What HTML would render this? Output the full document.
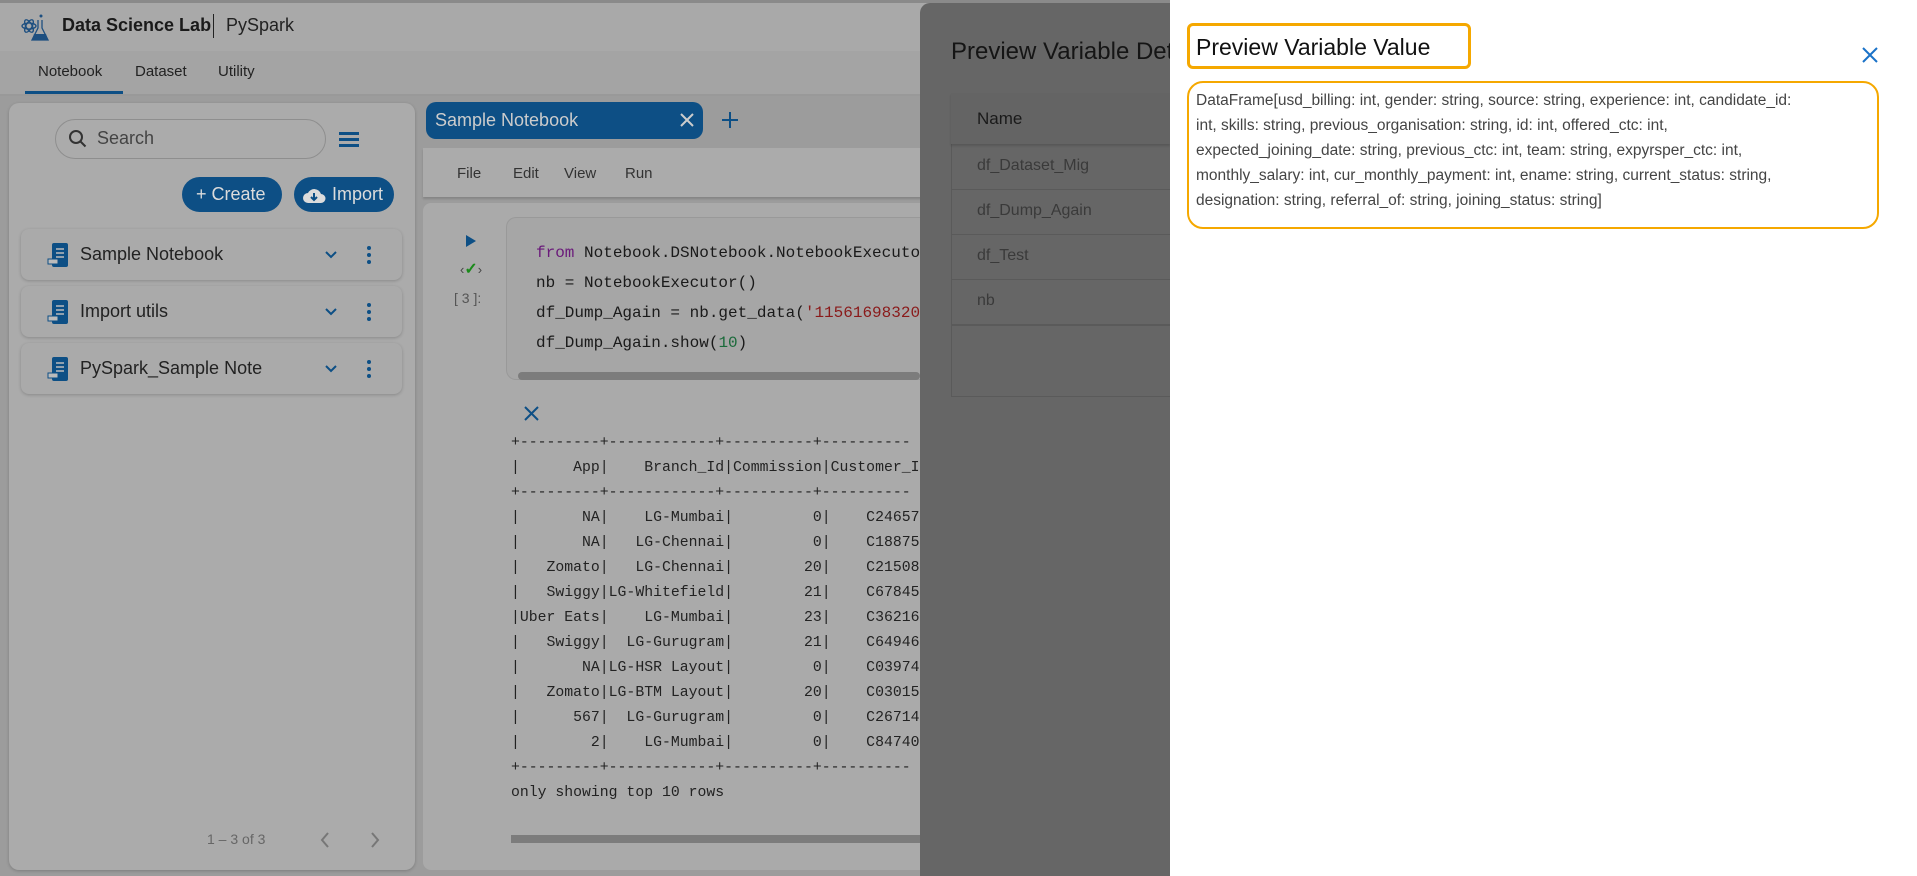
<!DOCTYPE html>
<html><head><meta charset="utf-8"><style>
*{box-sizing:border-box;margin:0;padding:0}
body{width:1917px;height:876px;overflow:hidden;position:relative;background:#9c9c9c;font-family:"Liberation Sans",sans-serif}
.a{position:absolute}
.mono{font-family:"Liberation Mono","DejaVu Sans Mono",monospace}
</style></head><body>
<div class="a" style="left:0;top:0;width:1917px;height:3px;background:#8a8a8a"></div>
<div class="a" style="left:0;top:3px;width:1917px;height:48px;background:#a9a9a9"></div>
<svg class="a" style="left:20px;top:12px" width="32" height="32" viewBox="0 0 32 32"><g fill="none" stroke="#1d4f80" stroke-width="1.3"><ellipse cx="9" cy="14" rx="7" ry="3"/><ellipse cx="9" cy="14" rx="7" ry="3" transform="rotate(60 9 14)"/><ellipse cx="9" cy="14" rx="7" ry="3" transform="rotate(-60 9 14)"/><path d="M18 8v8l-6 12h16l-6-12V8"/></g><path d="M14 22h12l2 6H12z" fill="#1d4f80"/><circle cx="21" cy="4" r="1.5" fill="#1d4f80"/></svg>
<div class="a" style="left:62px;top:15px;font-size:18px;font-weight:bold;color:#1a1a1a">Data Science Lab</div>
<div class="a" style="left:213px;top:14px;width:1px;height:24px;background:#222"></div>
<div class="a" style="left:226px;top:15px;font-size:18px;color:#222">PySpark</div>
<div class="a" style="left:0;top:51px;width:1917px;height:45px;background:#a4a4a4;border-bottom:2px solid #999"></div>
<div class="a" style="left:38px;top:63px;font-size:15px;color:#222">Notebook</div>
<div class="a" style="left:135px;top:63px;font-size:15px;color:#222">Dataset</div>
<div class="a" style="left:218px;top:63px;font-size:15px;color:#222">Utility</div>
<div class="a" style="left:25px;top:91px;width:98px;height:3px;background:#0d4f85"></div>

<div class="a" style="left:9px;top:103px;width:406px;height:767px;background:#ababab;border-radius:10px;box-shadow:0 1px 3px rgba(0,0,0,.2)"></div>
<div class="a" style="left:55px;top:119px;width:271px;height:40px;border:1px solid #8e8e8e;border-radius:20px"></div>
<svg class="a" style="left:68px;top:129px" width="20" height="20" viewBox="0 0 20 20"><circle cx="8" cy="8" r="6" fill="none" stroke="#333" stroke-width="2"/><path d="M12.5 12.5l5 5" stroke="#333" stroke-width="2"/></svg>
<div class="a" style="left:97px;top:128px;font-size:18px;color:#444">Search</div>
<div class="a" style="left:339px;top:132px;width:20px;height:3px;background:#0d4f85;box-shadow:0 6px 0 #0d4f85,0 12px 0 #0d4f85"></div>
<div class="a" style="left:182px;top:177px;width:100px;height:35px;background:#0d4f85;border-radius:18px;color:#dcdcdc;font-size:18px;line-height:35px;padding-left:14px">+ Create</div>
<div class="a" style="left:294px;top:177px;width:100px;height:35px;background:#0d4f85;border-radius:18px;color:#dcdcdc;font-size:18px;line-height:35px;padding-left:38px">Import</div>
<svg class="a" style="left:302px;top:185px" width="24" height="20" viewBox="0 0 24 20"><path d="M6 18a5 5 0 0 1 0-10 7 7 0 0 1 13 1 4.5 4.5 0 0 1 0 9z" fill="#dcdcdc"/><path d="M12 8v7M9 12l3 3 3-3" stroke="#0d4f85" stroke-width="2" fill="none"/></svg>

<div class="a" style="left:21px;top:229px;width:381px;height:51px;background:#aaaaaa;border-radius:8px;box-shadow:0 1px 3px rgba(0,0,0,.2)"></div>
<div class="a" style="left:21px;top:286px;width:381px;height:51px;background:#aaaaaa;border-radius:8px;box-shadow:0 1px 3px rgba(0,0,0,.2)"></div>
<div class="a" style="left:21px;top:343px;width:381px;height:51px;background:#aaaaaa;border-radius:8px;box-shadow:0 1px 3px rgba(0,0,0,.2)"></div>
<svg class="a" style="left:47px;top:242px" width="24" height="26" viewBox="0 0 24 26"><rect x="5" y="1" width="16" height="24" rx="2" fill="#0d4f85"/><path d="M9 7h8M9 11h8M9 15h8" stroke="#bbb" stroke-width="1.5"/><rect x="1" y="17" width="10" height="5" fill="#bbb" stroke="#0d4f85"/></svg>
<svg class="a" style="left:47px;top:299px" width="24" height="26" viewBox="0 0 24 26"><rect x="5" y="1" width="16" height="24" rx="2" fill="#0d4f85"/><path d="M9 7h8M9 11h8M9 15h8" stroke="#bbb" stroke-width="1.5"/><rect x="1" y="17" width="10" height="5" fill="#bbb" stroke="#0d4f85"/></svg>
<svg class="a" style="left:47px;top:356px" width="24" height="26" viewBox="0 0 24 26"><rect x="5" y="1" width="16" height="24" rx="2" fill="#0d4f85"/><path d="M9 7h8M9 11h8M9 15h8" stroke="#bbb" stroke-width="1.5"/><rect x="1" y="17" width="10" height="5" fill="#bbb" stroke="#0d4f85"/></svg>
<div class="a" style="left:80px;top:244px;font-size:18px;color:#222">Sample Notebook</div>
<div class="a" style="left:80px;top:301px;font-size:18px;color:#222">Import utils</div>
<div class="a" style="left:80px;top:358px;font-size:18px;color:#222">PySpark_Sample Note</div>
<svg class="a" style="left:323px;top:248px" width="16" height="130" viewBox="0 0 16 130"><g stroke="#0d4f85" stroke-width="2" fill="none"><path d="M3 4l5 5 5-5"/><path d="M3 61l5 5 5-5"/><path d="M3 118l5 5 5-5"/></g></svg>
<svg class="a" style="left:365px;top:245px" width="8" height="140" viewBox="0 0 8 140"><g fill="#0d4f85"><circle cx="4" cy="3" r="2"/><circle cx="4" cy="10" r="2"/><circle cx="4" cy="17" r="2"/><circle cx="4" cy="60" r="2"/><circle cx="4" cy="67" r="2"/><circle cx="4" cy="74" r="2"/><circle cx="4" cy="117" r="2"/><circle cx="4" cy="124" r="2"/><circle cx="4" cy="131" r="2"/></g></svg>
<div class="a" style="left:207px;top:831px;font-size:14px;color:#666">1 – 3 of 3</div>
<svg class="a" style="left:318px;top:830px" width="70" height="20" viewBox="0 0 70 20"><path d="M10 3l-6 7 6 7M54 3l6 7-6 7" stroke="#777" stroke-width="2" fill="none"/></svg>

<div class="a" style="left:426px;top:102px;width:277px;height:37px;background:#0d4f85;border-radius:10px;color:#ccc;font-size:18px;line-height:37px;padding-left:9px">Sample Notebook</div>
<svg class="a" style="left:680px;top:113px" width="14" height="14" viewBox="0 0 14 14"><path d="M1 1l12 12M13 1L1 13" stroke="#ccc" stroke-width="2"/></svg>
<svg class="a" style="left:722px;top:112px" width="16" height="16" viewBox="0 0 16 16"><path d="M8 0v16M0 8h16" stroke="#0d4f85" stroke-width="2"/></svg>
<div class="a" style="left:423px;top:148px;width:520px;height:49px;background:#ababab;box-shadow:0 2px 2px rgba(0,0,0,.15)"></div>
<div class="a" style="left:457px;top:165px;font-size:15px;color:#333">File</div>
<div class="a" style="left:513px;top:165px;font-size:15px;color:#333">Edit</div>
<div class="a" style="left:564px;top:165px;font-size:15px;color:#333">View</div>
<div class="a" style="left:625px;top:165px;font-size:15px;color:#333">Run</div>
<div class="a" style="left:423px;top:203px;width:520px;height:667px;background:#aaaaaa;border-radius:8px"></div>
<svg class="a" style="left:464px;top:233px" width="14" height="16" viewBox="0 0 14 16"><path d="M2 2l10 6-10 6z" fill="#0d4f85"/></svg>
<div class="a" style="left:460px;top:259px;font-size:13px;color:#444">‹<span style="color:#1a8a1a;font-weight:bold;font-size:16px">✓</span>›</div>
<div class="a" style="left:454px;top:290px;font-size:14px;color:#555">[ 3 ]:</div>
<div class="a" style="left:506px;top:217px;width:440px;height:163px;background:#a6a6a6;border:1px solid #999;border-right:none;border-radius:10px 0 0 10px"></div>
<div class="a mono" style="left:536px;top:238px;font-size:16px;line-height:30px;color:#1a1a1a;white-space:pre"><span style="color:#6a1a7a">from</span> Notebook.DSNotebook.NotebookExecuto
nb = NotebookExecutor()
df_Dump_Again = nb.get_data(<span style="color:#8a1a1a">'11561698320</span>
df_Dump_Again.show(<span style="color:#1a6a3a">10</span>)</div>
<div class="a" style="left:518px;top:372px;width:402px;height:8px;background:#7c7c7c;border-radius:4px"></div>
<svg class="a" style="left:524px;top:406px" width="15" height="15" viewBox="0 0 15 15"><path d="M1 1l13 13M14 1L1 14" stroke="#0d4f85" stroke-width="2"/></svg>
<div class="a mono" style="left:511px;top:431px;font-size:14.8px;line-height:25px;color:#222;white-space:pre">+---------+------------+----------+----------
|      App|    Branch_Id|Commission|Customer_I
+---------+------------+----------+----------
|       NA|    LG-Mumbai|         0|    C24657
|       NA|   LG-Chennai|         0|    C18875
|   Zomato|   LG-Chennai|        20|    C21508
|   Swiggy|LG-Whitefield|        21|    C67845
|Uber Eats|    LG-Mumbai|        23|    C36216
|   Swiggy|  LG-Gurugram|        21|    C64946
|       NA|LG-HSR Layout|         0|    C03974
|   Zomato|LG-BTM Layout|        20|    C03015
|      567|  LG-Gurugram|         0|    C26714
|        2|    LG-Mumbai|         0|    C84740
+---------+------------+----------+----------
only showing top 10 rows</div>
<div class="a" style="left:511px;top:835px;width:420px;height:8px;background:#7c7c7c"></div>

<div class="a" style="left:920px;top:3px;width:260px;height:873px;background:#666;border-radius:10px 0 0 0"></div>
<div class="a" style="left:951px;top:38px;font-size:24px;color:#151515;white-space:nowrap;width:219px;overflow:hidden">Preview Variable Details</div>
<div class="a" style="left:951px;top:93px;width:219px;height:304px;border:1px solid #5a5a5a;border-right:none"></div>
<div class="a" style="left:951px;top:93px;width:219px;height:51px;background:#646464;box-shadow:0 2px 2px rgba(0,0,0,.15)"></div>
<div class="a" style="left:977px;top:109px;font-size:17px;color:#1a1a1a">Name</div>
<div class="a" style="left:951px;top:189px;width:219px;height:1px;background:#5a5a5a"></div>
<div class="a" style="left:951px;top:234px;width:219px;height:1px;background:#5a5a5a"></div>
<div class="a" style="left:951px;top:279px;width:219px;height:1px;background:#5a5a5a"></div>
<div class="a" style="left:951px;top:324px;width:219px;height:2px;background:#5a5a5a"></div>
<div class="a" style="left:977px;top:157px;font-size:16px;color:#3a3a3a">df_Dataset_Mig</div>
<div class="a" style="left:977px;top:202px;font-size:16px;color:#3a3a3a">df_Dump_Again</div>
<div class="a" style="left:977px;top:247px;font-size:16px;color:#3a3a3a">df_Test</div>
<div class="a" style="left:977px;top:292px;font-size:16px;color:#3a3a3a">nb</div>

<div class="a" style="left:1170px;top:0;width:747px;height:876px;background:#fff"></div>
<div class="a" style="left:1187px;top:23px;width:284px;height:46px;border:3px solid #f5a800;border-radius:6px"></div>
<div class="a" style="left:1196px;top:34px;font-size:23px;color:#111">Preview Variable Value</div>
<svg class="a" style="left:1862px;top:47px" width="16" height="16" viewBox="0 0 16 16"><path d="M1 1l14 14M15 1L1 15" stroke="#1a72c8" stroke-width="2"/></svg>
<div class="a" style="left:1187px;top:81px;width:692px;height:148px;border:2px solid #f5a800;border-radius:16px"></div>
<div class="a" style="left:1196px;top:88px;width:680px;font-size:15.5px;line-height:25px;color:#444">DataFrame[usd_billing: int, gender: string, source: string, experience: int, candidate_id:<br>int, skills: string, previous_organisation: string, id: int, offered_ctc: int,<br>expected_joining_date: string, previous_ctc: int, team: string, expyrsper_ctc: int,<br>monthly_salary: int, cur_monthly_payment: int, ename: string, current_status: string,<br>designation: string, referral_of: string, joining_status: string]</div>
</body></html>
